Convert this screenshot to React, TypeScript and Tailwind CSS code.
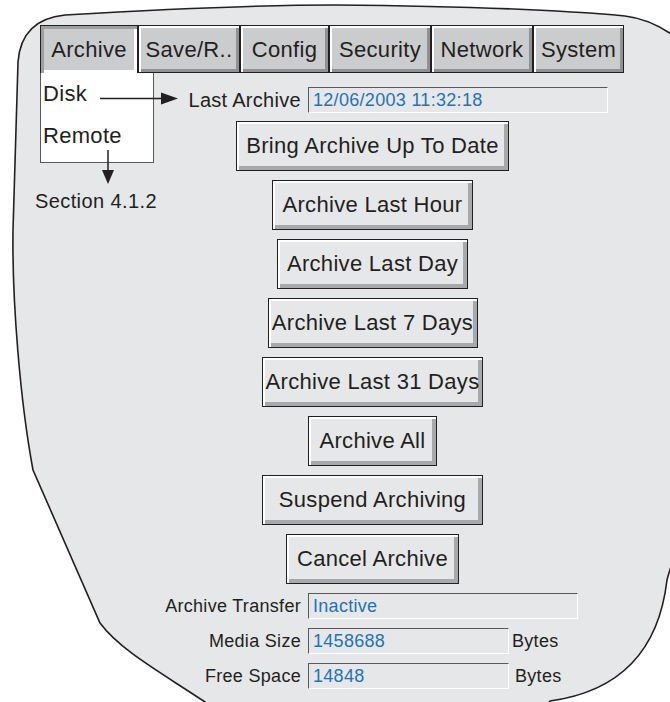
import React from 'react';

const tabs = [
  { label: 'Archive', w: 'w-[98px]', active: true },
  { label: 'Save/R..', w: 'w-[102px]' },
  { label: 'Config', w: 'w-[89px]' },
  { label: 'Security', w: 'w-[102px]' },
  { label: 'Network', w: 'w-[102px]' },
  { label: 'System', w: 'w-[91px]' },
];

const buttons = [
  { label: 'Bring Archive Up To Date', w: 'w-[273px]' },
  { label: 'Archive Last Hour', w: 'w-[201px]' },
  { label: 'Archive Last Day', w: 'w-[191px]' },
  { label: 'Archive Last 7 Days', w: 'w-[210px]' },
  { label: 'Archive Last 31 Days', w: 'w-[221px]' },
  { label: 'Archive All', w: 'w-[129px]' },
  { label: 'Suspend Archiving', w: 'w-[221px]' },
  { label: 'Cancel Archive', w: 'w-[173px]' },
];

const Field = ({ value, w }: { value: string; w: string }) => (
  <div
    className={`${w} h-[26px] flex items-center pl-[4px] leading-none border-t border-l border-[#58595b] border-r border-b border-r-white border-b-white bg-[#e6e7e8] text-[18px] tracking-[0.3px] text-[#1f73b7]`}
  >
    {value}
  </div>
);

export default function App() {
  return (
    <div className="relative w-[670px] h-[702px] overflow-hidden bg-white font-['Liberation_Sans',Arial,sans-serif] text-[#231f20]">
      {/* screen outline, right side runs past the frame */}
      <svg className="absolute left-0 top-0 overflow-hidden" width="670" height="702" viewBox="0 0 670 702">
        <path
          d="M 65 15 C 150 10, 250 5, 335 5 C 450 6, 560 10, 625 16 C 650 19, 675 32, 700 60 L 900 60 L 900 500 L 700 500 C 685 530, 672 560, 667 580 C 660 640, 630 690, 550 701 L 540 720 L 210 720 L 205 702 C 160 672, 120 650, 100 623 L 33 470 C 20 400, 12 300, 13 230 L 18 62 C 20 35, 35 18, 65 15 Z"
          fill="#e6e7e8"
          stroke="#231f20"
          strokeWidth="1.6"
        />
      </svg>

      <div className="relative flex flex-col pt-[25px]">
        {/* tab bar */}
        <div className="flex pl-[40px] h-[48px]">
          {tabs.map((t) => (
            <div
              key={t.label}
              className={`${t.w} h-full flex items-center justify-center text-[22px] tracking-[0.3px] bg-[#cbccce] border border-[#231f20] ${
                t.active
                  ? 'border-b-0 shadow-[inset_3px_3px_0_#9d9fa2,inset_-3px_-3px_0_#ffffff]'
                  : 'shadow-[inset_2px_2px_0_#ffffff,inset_-3px_-3px_0_#8f9194]'
              }`}
            >
              {t.label}
            </div>
          ))}
        </div>

        {/* last archive */}
        <div className="flex items-center pl-[186px] mt-[14px] gap-[7px]">
          <div className="w-[115px] text-right text-[20px] leading-none tracking-[0.3px]">Last Archive</div>
          <Field value="12/06/2003 11:32:18" w="w-[300px]" />
        </div>

        {/* actions */}
        <div className="flex flex-col items-center gap-[9px] pl-[75px] mt-[8px]">
          {buttons.map((b) => (
            <div
              key={b.label}
              className={`${b.w} h-[50px] flex items-center justify-center pb-[2px] text-[22px] tracking-[0.3px] bg-[#e6e7e8] border border-[#231f20] shadow-[inset_2px_2px_0_#ffffff,inset_-4px_-4px_0_#a7a9ac]`}
            >
              {b.label}
            </div>
          ))}
        </div>

        {/* status fields */}
        <div className="flex flex-col gap-[9px] pl-[150px] mt-[9px] text-[18px] leading-none tracking-[0.3px]">
          <div className="flex items-center gap-[7px]">
            <div className="w-[151px] text-right">Archive Transfer</div>
            <Field value="Inactive" w="w-[270px]" />
          </div>
          <div className="flex items-center gap-[7px]">
            <div className="w-[151px] text-right">Media Size</div>
            <Field value="1458688" w="w-[201px]" />
            <span className="ml-[-4px]">Bytes</span>
          </div>
          <div className="flex items-center gap-[7px]">
            <div className="w-[151px] text-right">Free Space</div>
            <Field value="14848" w="w-[201px]" />
            <span className="ml-[-1px]">Bytes</span>
          </div>
        </div>
      </div>

      {/* dropped-down menu under Archive */}
      <div className="absolute left-[40px] top-[73px] w-[114px] h-[90px] bg-white border border-t-0 border-[#58595b] pl-[2px] text-[22px] tracking-[0.3px] leading-[42px]">
        <div>Disk</div>
        <div>Remote</div>
      </div>

      {/* annotation arrows */}
      <svg className="absolute left-0 top-0 pointer-events-none" width="670" height="702">
        <line x1="100" y1="98.5" x2="163" y2="98.5" stroke="#231f20" strokeWidth="1.5" />
        <polygon points="161,92.5 178,98.5 161,104.5" fill="#231f20" />
        <line x1="108" y1="150" x2="108" y2="172" stroke="#231f20" strokeWidth="1.5" />
        <polygon points="102,170 114,170 108,184" fill="#231f20" />
      </svg>
      <div className="absolute left-[35px] top-[189px] text-[20px] leading-[24px] tracking-[0.4px]">Section 4.1.2</div>
    </div>
  );
}
